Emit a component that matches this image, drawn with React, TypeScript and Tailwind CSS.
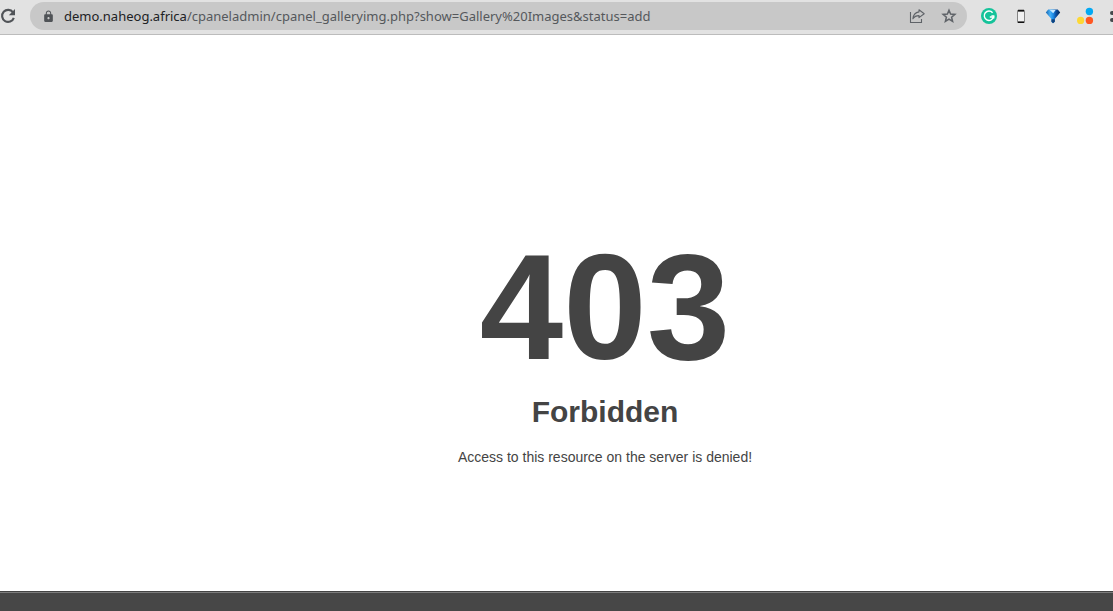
import React from "react";
import { MdLock } from "react-icons/md";

function ReloadIcon() {
  return (
    <svg width="16" height="16" viewBox="0 0 16 16" fill="none">
      <path d="M13 4.4A6 6 0 1 0 13.8 9.8" stroke="#505357" strokeWidth="2.1" />
      <path d="M15 1V7.2H8.8Z" fill="#505357" />
    </svg>
  );
}

function StarIcon() {
  return (
    <svg width="16" height="16" viewBox="0 0 16 16" fill="none" stroke="#5f6368" strokeWidth="1.5">
      <path d="M8 2.2L9.6 6.1L13.9 6.4L10.6 9.2L11.6 13.4L8 11.1L4.4 13.4L5.4 9.2L2.1 6.4L6.4 6.1Z" />
    </svg>
  );
}

function ShareIcon() {
  return (
    <svg width="16" height="16" viewBox="0 0 16 16" fill="none" stroke="#5f6368" strokeWidth="1.1">
      <path d="M1.5 4V14.5H12.5V11" />
      <path d="M10 1.8L15.2 5.7L10 9.6V7.6C7 7.6 5.2 8.6 3.9 10.8C4.3 7 6.4 4.4 10 3.9Z" strokeLinejoin="round" />
    </svg>
  );
}

function WriterIcon() {
  return (
    <svg width="16" height="16" viewBox="0 0 16 16" fill="none">
      <circle cx="8" cy="8" r="8" fill="#15c39a" />
      <path d="M11.6 4.7A4.7 4.7 0 1 0 12.5 9H8.8" stroke="#fff" strokeWidth="1.4" />
      <path d="M10.4 7.9L12.8 7.9V10.6" stroke="#fff" strokeWidth="1.2" />
    </svg>
  );
}

function PhoneIcon() {
  return (
    <svg width="16" height="16" viewBox="0 0 16 16">
      <rect x="4" y="2" width="8" height="13" rx="1" fill="#858585" />
      <rect x="5" y="4" width="6" height="9" fill="#f1f1f1" />
      <path d="M5 2.5H11M5 14.3H11" stroke="#111" strokeWidth="1.3" />
    </svg>
  );
}

function GemIcon() {
  return (
    <svg width="16" height="16" viewBox="0 0 16 16">
      <defs>
        <linearGradient id="gem" x1="0" y1="0" x2="1" y2="0">
          <stop offset="0" stopColor="#1763ad" />
          <stop offset="0.3" stopColor="#45b0f7" />
          <stop offset="0.5" stopColor="#1f8fea" />
          <stop offset="0.7" stopColor="#0b4fa3" />
          <stop offset="1" stopColor="#06264f" />
        </linearGradient>
      </defs>
      <path d="M3.2 1.5H12.8L15.2 4.5L9.8 11V13.8L8 15.2L6.4 13.8V11L0.8 4.5Z" fill="url(#gem)" />
      <path d="M4.8 2H10.6L8.2 5.2Z" fill="#c9e9ff" />
      <path d="M6.4 11.3H9.8V13.8L8 15.2L6.4 13.8Z" fill="#10437f" />
    </svg>
  );
}

function DotsIcon() {
  return (
    <svg width="18" height="18" viewBox="0 0 18 18">
      <circle cx="13.4" cy="4.5" r="3.7" fill="#03a9f4" />
      <circle cx="4.6" cy="13.4" r="3.6" fill="#fdd835" />
      <circle cx="13.4" cy="13.4" r="3.7" fill="#ff5722" />
    </svg>
  );
}

function ListIcon() {
  return (
    <svg width="16" height="16" viewBox="0 0 16 16" fill="#45484c">
      <rect x="1" y="3" width="14" height="4" rx="2" />
      <rect x="1" y="10" width="14" height="4" rx="2" />
    </svg>
  );
}

const extensions = [
  { label: "Writing assistant", icon: <WriterIcon /> },
  { label: "Mobile view", icon: <PhoneIcon /> },
  { label: "Gem", icon: <GemIcon /> },
  { label: "Color dots", icon: <DotsIcon /> },
];

export default function App() {
  return (
    <div className="flex min-h-screen flex-col overflow-x-hidden bg-white font-['Liberation_Sans',Arial,sans-serif] text-[#444]">
      <header className="flex h-[35px] items-start border-b border-[#bcbcbc] bg-[#e2e2e2]">
        <button aria-label="Reload" className="-ml-0.5 flex h-8 w-5 shrink-0 items-center justify-center">
          <ReloadIcon />
        </button>
        <div className="ml-3 mt-0.5 flex h-7 min-w-0 flex-1 items-center rounded-full bg-[#c8c8c8] pl-3 pr-2">
          <MdLock size={13} className="shrink-0 text-[#505357]" />
          <a
            href="#"
            className="ml-[9px] min-w-0 flex-1 truncate font-['Noto_Sans','Segoe_UI',sans-serif] text-[13px] leading-5 text-[#55585c]"
          >
            <span className="text-[#202124]">demo.naheog.africa</span>
            /cpaneladmin/cpanel_galleryimg.php?show=Gallery%20Images&amp;status=add
          </a>
          <button aria-label="Share" className="flex w-4 justify-center">
            <ShareIcon />
          </button>
          <button aria-label="Bookmark" className="ml-3.5 flex w-5 justify-center">
            <StarIcon />
          </button>
        </div>
        <div className="ml-1.5 flex h-8 shrink-0">
          {extensions.map((item) => (
            <button key={item.label} aria-label={item.label} className="flex w-8 items-center justify-center">
              {item.icon}
            </button>
          ))}
          <button aria-label="More" className="flex w-3 items-center overflow-hidden pl-2">
            <span className="shrink-0">
              <ListIcon />
            </span>
          </button>
        </div>
      </header>
      <main className="flex-1 pl-[97px] pt-[197px] text-center">
        <h1 className="text-[150px] font-bold leading-[150px]">403</h1>
        <h2 className="mt-5 text-[30px] font-bold leading-5">Forbidden</h2>
        <p className="mt-[25px] text-sm leading-5">Access to this resource on the server is denied!</p>
      </main>
      <footer className="h-5 border-t border-[#444] bg-[#474747]">
        <div className="h-px bg-[#7d7d7d]" />
      </footer>
    </div>
  );
}
